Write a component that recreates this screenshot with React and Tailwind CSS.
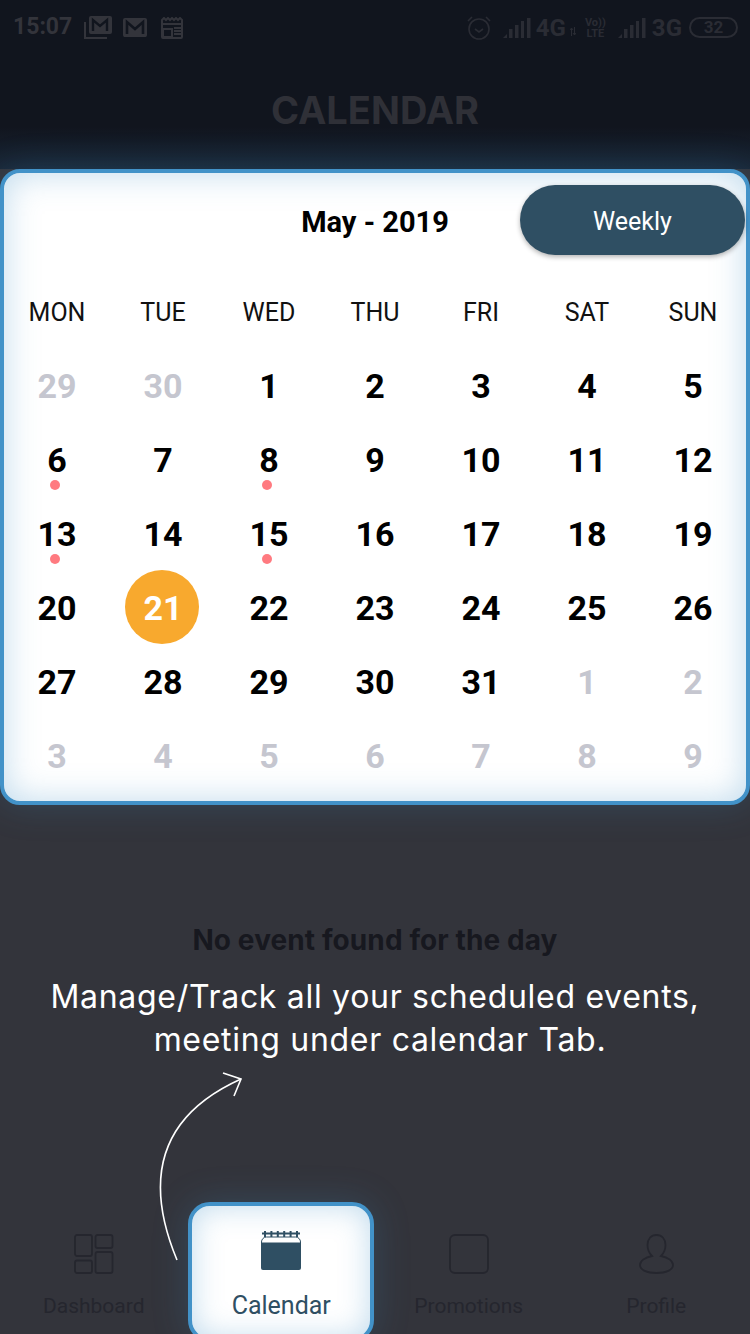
import React from "react";

const weekdays = ["MON", "TUE", "WED", "THU", "FRI", "SAT", "SUN"];

const days = [
  { n: 29, muted: true }, { n: 30, muted: true }, { n: 1 }, { n: 2 }, { n: 3 }, { n: 4 }, { n: 5 },
  { n: 6, dot: true }, { n: 7 }, { n: 8, dot: true }, { n: 9 }, { n: 10 }, { n: 11 }, { n: 12 },
  { n: 13, dot: true }, { n: 14 }, { n: 15, dot: true }, { n: 16 }, { n: 17 }, { n: 18 }, { n: 19 },
  { n: 20 }, { n: 21, today: true }, { n: 22 }, { n: 23 }, { n: 24 }, { n: 25 }, { n: 26 },
  { n: 27 }, { n: 28 }, { n: 29 }, { n: 30 }, { n: 31 }, { n: 1, muted: true }, { n: 2, muted: true },
  { n: 3, muted: true }, { n: 4, muted: true }, { n: 5, muted: true }, { n: 6, muted: true }, { n: 7, muted: true }, { n: 8, muted: true }, { n: 9, muted: true },
];

const Signal = () => (
  <svg width="28" height="22" viewBox="0 0 28 22" fill="#2a2c34">
    <path d="M0 21l4-4v4z" />
    <rect x="6" y="12" width="3.5" height="9" />
    <rect x="12" y="8" width="3.5" height="13" />
    <rect x="18" y="4" width="3" height="17" />
    <rect x="24" y="1" width="3.5" height="20" />
  </svg>
);

const MailGlyph = ({ size = 24 }) => (
  <svg width={size} height={size * 0.8} viewBox="0 0 24 19">
    <rect x="0" y="0" width="24" height="19" rx="2" fill="#33343b" />
    <path d="M4 16V4l8 7 8-7v12" fill="none" stroke="#11151e" strokeWidth="2.6" />
  </svg>
);

const StatusBar = () => (
  <div className="flex items-center justify-between h-[54px] pl-[13px] pr-[12px] pt-[1px] text-[#33343b]">
    <div className="flex items-center">
      <span className="text-[23px] font-bold font-['Roboto',sans-serif]">15:07</span>
      <svg className="ml-[12px]" width="28" height="24" viewBox="0 0 28 24">
        <path d="M1 6v16h22" fill="none" stroke="#33343b" strokeWidth="2" />
        <rect x="5" y="0" width="23" height="18" rx="2" fill="#33343b" />
        <path d="M9 15V4l7 6 7-6v11" fill="none" stroke="#11151e" strokeWidth="2.4" />
      </svg>
      <span className="ml-[11px] flex">
        <MailGlyph />
      </span>
      <svg className="ml-[14px]" width="23" height="22" viewBox="0 0 23 22">
        <path d="M1 3l2-2 2 2 2-2 2 2 2-2 2 2 2-2 2 2 2-2 2 2v17a1 1 0 0 1-1 1H2a1 1 0 0 1-1-1z" fill="none" stroke="#33343b" strokeWidth="2" />
        <path d="M1 7h21M2 12h9v8H2zM13 11h8M13 14h8M13 17h8" stroke="#33343b" strokeWidth="2" fill="none" />
      </svg>
    </div>
    <div className="flex items-center font-['Roboto',sans-serif] font-bold text-[#2a2c34]">
      <svg width="24" height="24" viewBox="0 0 24 24" fill="none" stroke="#2a2c34" strokeWidth="1.6">
        <circle cx="12" cy="13" r="10" />
        <path d="M8 13l4 3 4-3M1 5l4-4M23 5l-4-4" />
      </svg>
      <span className="ml-[12px] flex"><Signal /></span>
      <span className="ml-[5px] text-[24px] leading-none">4G</span>
      <svg className="ml-[4px] mt-[8px]" width="6" height="9" viewBox="0 0 6 9" fill="none" stroke="#2a2c34" strokeWidth="1">
        <path d="M1.5 9V1M0 3l1.5-2L3 3M4.5 0v8M3 6l1.5 2L6 6" />
      </svg>
      <div className="ml-[8px] flex flex-col text-[11px] leading-[11px] font-bold items-center w-[23px]">
        <span>Vo))</span>
        <span>LTE</span>
      </div>
      <span className="ml-[11px] flex"><Signal /></span>
      <span className="ml-[6px] text-[24px] leading-none">3G</span>
      <div className="ml-[7px] w-[49px] h-[21px] rounded-full border-2 border-[#2a2c34] flex items-center justify-center text-[17px] leading-none">32</div>
    </div>
  </div>
);

const CalendarCard = () => (
  <div className="relative z-10 h-[636px] rounded-[20px] border-4 border-[#4292c8] bg-white shadow-[0_0_36px_rgba(66,146,200,0.22),inset_0_0_34px_rgba(66,146,200,0.34)] font-['Roboto',sans-serif]">
    <div className="grid grid-cols-[225px_1fr_225px] items-center pt-[12px] pr-px">
      <div />
      <div className="text-center text-[29px] font-bold text-black pt-[6px] pl-px">May - 2019</div>
      <button className="h-[70px] pt-[4px] rounded-full bg-[#2f4f63] text-white text-[25px] shadow-[0_2px_5px_rgba(0,0,0,0.3)]">Weekly</button>
    </div>
    <div className="grid grid-cols-7 mt-[40px]">
      {weekdays.map((d) => (
        <div key={d} className="text-center text-[25px] leading-[36px] text-[#111]">{d}</div>
      ))}
    </div>
    <div className="grid grid-cols-7 auto-rows-[74px] mt-[18px]">
      {days.map((d, i) => (
        <div key={i} className="relative flex items-center justify-center">
          {d.today && <div className="absolute w-[74px] h-[74px] rounded-full bg-[#f8a92e] left-[15px] -top-px" />}
          <span className={`relative text-[34px] font-bold ${d.today ? "text-white" : d.muted ? "text-[#c5c6cf]" : "text-black"}`}>{d.n}</span>
          {d.dot && <div className="absolute top-[57px] left-[46px] w-[10px] h-[10px] rounded-full bg-[#ff7a80]" />}
        </div>
      ))}
    </div>
  </div>
);

const NavIcon = ({ name }) => {
  if (name === "dashboard") {
    return (
      <svg width="40" height="40" viewBox="0 0 40 40" fill="none" stroke="#25262e" strokeWidth="1.8">
        <rect x="1" y="1" width="17" height="21" rx="2" />
        <rect x="21.5" y="1" width="17" height="13" rx="2" />
        <rect x="1" y="26.5" width="17" height="12.5" rx="2" />
        <rect x="21.5" y="18" width="17" height="21" rx="2" />
      </svg>
    );
  }
  if (name === "calendar") {
    return (
      <svg width="40" height="40" viewBox="0 0 40 40">
        <path d="M0.5 12a5 5 0 0 1 5-5h29a5 5 0 0 1 5 5v1h-39z" fill="#fff" stroke="#2f4f63" strokeWidth="1" />
        <path d="M1 3.5h38M4 1v6M10.4 1v6M16.8 1v6M23.2 1v6M29.6 1v6M36 1v6" stroke="#2f4f63" strokeWidth="2" />
        <path d="M0 13h40v25a2 2 0 0 1-2 2H2a2 2 0 0 1-2-2z" fill="#2f4f63" />
      </svg>
    );
  }
  if (name === "promotions") {
    return (
      <svg width="40" height="40" viewBox="0 0 40 40" fill="none" stroke="#25262e" strokeWidth="1.8">
        <rect x="1" y="1" width="38" height="38" rx="5" />
      </svg>
    );
  }
  return (
    <svg width="35" height="40" viewBox="0 0 35 40" fill="none" stroke="#25262e" strokeWidth="1.8">
      <path d="M17.5 1c5.5 0 9 4 9 10 0 5-2.5 9-4.5 11 7 1.5 12 5 12 9 0 5-7 8-16.5 8S1 36 1 31c0-4 5-7.5 12-9-2-2-4.5-6-4.5-11 0-6 3.5-10 9-10z" />
    </svg>
  );
};

const navItems = [
  { id: "dashboard", label: "Dashboard" },
  { id: "calendar", label: "Calendar", active: true },
  { id: "promotions", label: "Promotions" },
  { id: "profile", label: "Profile" },
];

export default function App() {
  return (
    <div className="relative w-[750px] h-[1334px] overflow-hidden bg-[#33343b] flex flex-col font-['Inter',sans-serif]">
      <div className="h-[169px] bg-[linear-gradient(to_bottom,#11151e_0%,#11151e_75%,#192636_100%)]">
        <StatusBar />
        <h1 className="text-center text-[38px] leading-[44px] font-bold text-[#2f3037] mt-[34px]">CALENDAR</h1>
      </div>

      <CalendarCard />

      <p className="mt-[118px] text-center text-[28px] leading-[34px] tracking-[0.1px] font-bold text-[#17181f]">No event found for the day</p>
      <p className="mt-[18px] text-center text-[32px] leading-[43px] tracking-[0.7px] text-white">
        Manage/Track all your scheduled events,
        <br />
        <span className="pl-[10px]">meeting under calendar Tab.</span>
      </p>

      <div className="mt-auto grid grid-cols-4 h-[132px] items-end">
        {navItems.map((item) =>
          item.active ? (
            <div key={item.id} className="mx-auto w-[186px] h-[140px] -mb-[8px] rounded-[22px] border-4 border-[#4292c8] bg-white shadow-[0_0_36px_rgba(66,146,200,0.22),inset_0_0_30px_rgba(66,146,200,0.34)] flex flex-col items-center pt-[24px] font-['Roboto',sans-serif]">
              <NavIcon name={item.id} />
              <span className="mt-[21px] text-[25px] leading-[30px] text-[#2f4f63]">{item.label}</span>
            </div>
          ) : (
            <div key={item.id} className="flex flex-col items-center h-[100px] font-['Roboto',sans-serif]">
              <NavIcon name={item.id} />
              <span className="mt-[19px] text-[21px] leading-[26px] text-[#25262e]">{item.label}</span>
            </div>
          )
        )}
      </div>

      {/* hint arrow over the nav */}
      <svg className="absolute left-[150px] top-[1065px] z-20" width="100" height="200" viewBox="150 1065 100 200" fill="none" stroke="#fff" strokeWidth="1.6">
        <path d="M177 1260C148 1190 150 1120 241 1079" />
        <path d="M223 1073l18 6-7 17" />
      </svg>
    </div>
  );
}
